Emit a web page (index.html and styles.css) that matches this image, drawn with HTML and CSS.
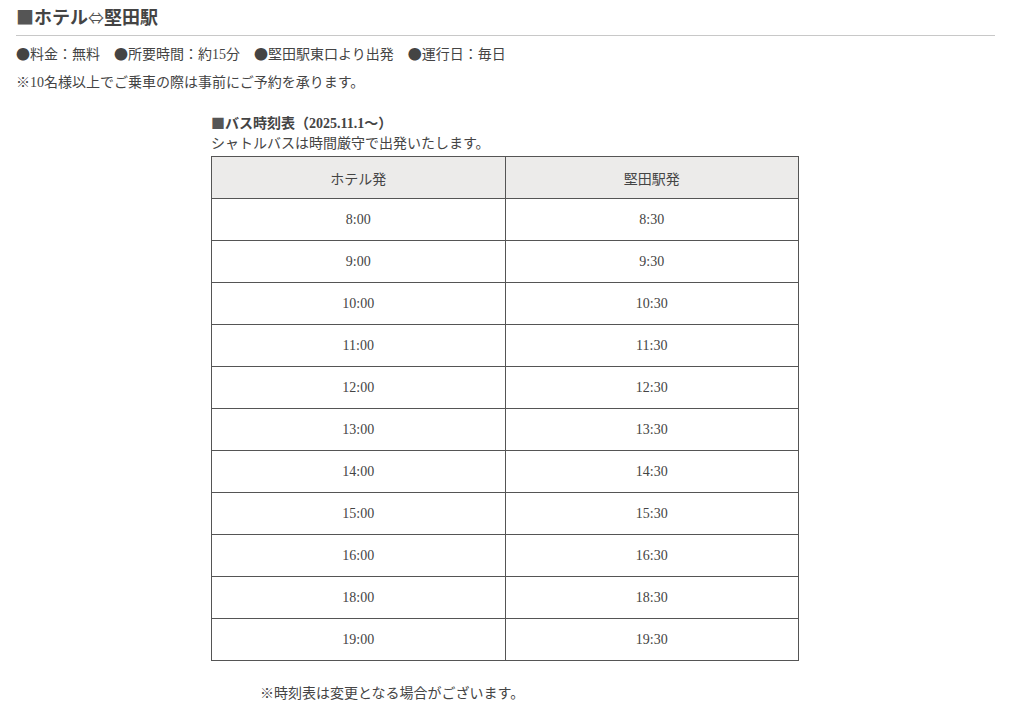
FILE: index.html
```html
<!DOCTYPE html>
<html lang="ja">
<head>
<meta charset="utf-8">
<link rel="stylesheet" href="styles.css">
</head>
<body>
<div class="page">
  <h2 class="title"><span class="sq">■</span>ホテル<span class="arr">⇔</span>堅田駅</h2>
  <p class="info"><span class="mk">●</span>料金：無料　<span class="mk">●</span>所要時間：約15分　<span class="mk">●</span>堅田駅東口より出発　<span class="mk">●</span>運行日：毎日</p>
  <p class="note">※10名様以上でご乗車の際は事前にご予約を承ります。</p>

  <div class="timetable">
    <p class="cap"><span class="sq">■</span>バス時刻表（2025.11.1～）</p>
    <p class="sub">シャトルバスは時間厳守で出発いたします。</p>
    <table>
      <thead>
        <tr><th>ホテル発</th><th>堅田駅発</th></tr>
      </thead>
      <tbody>
        <tr><td>8:00</td><td>8:30</td></tr>
        <tr><td>9:00</td><td>9:30</td></tr>
        <tr><td>10:00</td><td>10:30</td></tr>
        <tr><td>11:00</td><td>11:30</td></tr>
        <tr><td>12:00</td><td>12:30</td></tr>
        <tr><td>13:00</td><td>13:30</td></tr>
        <tr><td>14:00</td><td>14:30</td></tr>
        <tr><td>15:00</td><td>15:30</td></tr>
        <tr><td>16:00</td><td>16:30</td></tr>
        <tr><td>18:00</td><td>18:30</td></tr>
        <tr><td>19:00</td><td>19:30</td></tr>
      </tbody>
    </table>
    <p class="foot">※時刻表は変更となる場合がございます。</p>
  </div>
</div>
</body>
</html>
```
FILE: styles.css
```css
html, body {
  margin: 0;
  padding: 0;
  background: #fff;
}
body {
  font-family: "Liberation Serif", "Noto Sans CJK JP", serif;
  color: #444;
}
.page {
  padding: 5px 27px 0 16px;
}
.title {
  margin: 0;
  font-size: 18px;
  font-weight: bold;
  line-height: 26px;
  padding-bottom: 4px;
  border-bottom: 1px solid #c8c8c8;
  color: #444;
}
.sq, .mk, .arr {
  font-family: "Noto Sans CJK JP", sans-serif;
  line-height: 1;
}
.title .sq {
  color: #555;
}
.arr {
  font-weight: normal;
  font-size: 16px;
  color: #555;
}
.mk {
  color: #444;
}
.info {
  margin: 8px 0 0;
  font-size: 14px;
  line-height: 22px;
}
.note {
  margin: 6px 0 0;
  font-size: 14px;
  line-height: 22px;
}
.timetable {
  width: 588px;
  margin: 20px 0 0 195px;
}
.cap {
  margin: 0;
  font-size: 14px;
  font-weight: bold;
  line-height: 20px;
}
.cap .sq {
  color: #555;
}
.sub {
  margin: 0 0 2px;
  font-size: 14px;
  line-height: 20px;
}
table {
  width: 588px;
  border-collapse: collapse;
  table-layout: fixed;
}
th, td {
  border: 1px solid #555;
  height: 41px;
  padding: 0;
  text-align: center;
  font-size: 14px;
  font-weight: normal;
  color: #444;
}
th {
  background: #ecebea;
}
.foot {
  margin: 22px 0 0 49px;
  font-size: 14px;
  line-height: 22px;
}
```
